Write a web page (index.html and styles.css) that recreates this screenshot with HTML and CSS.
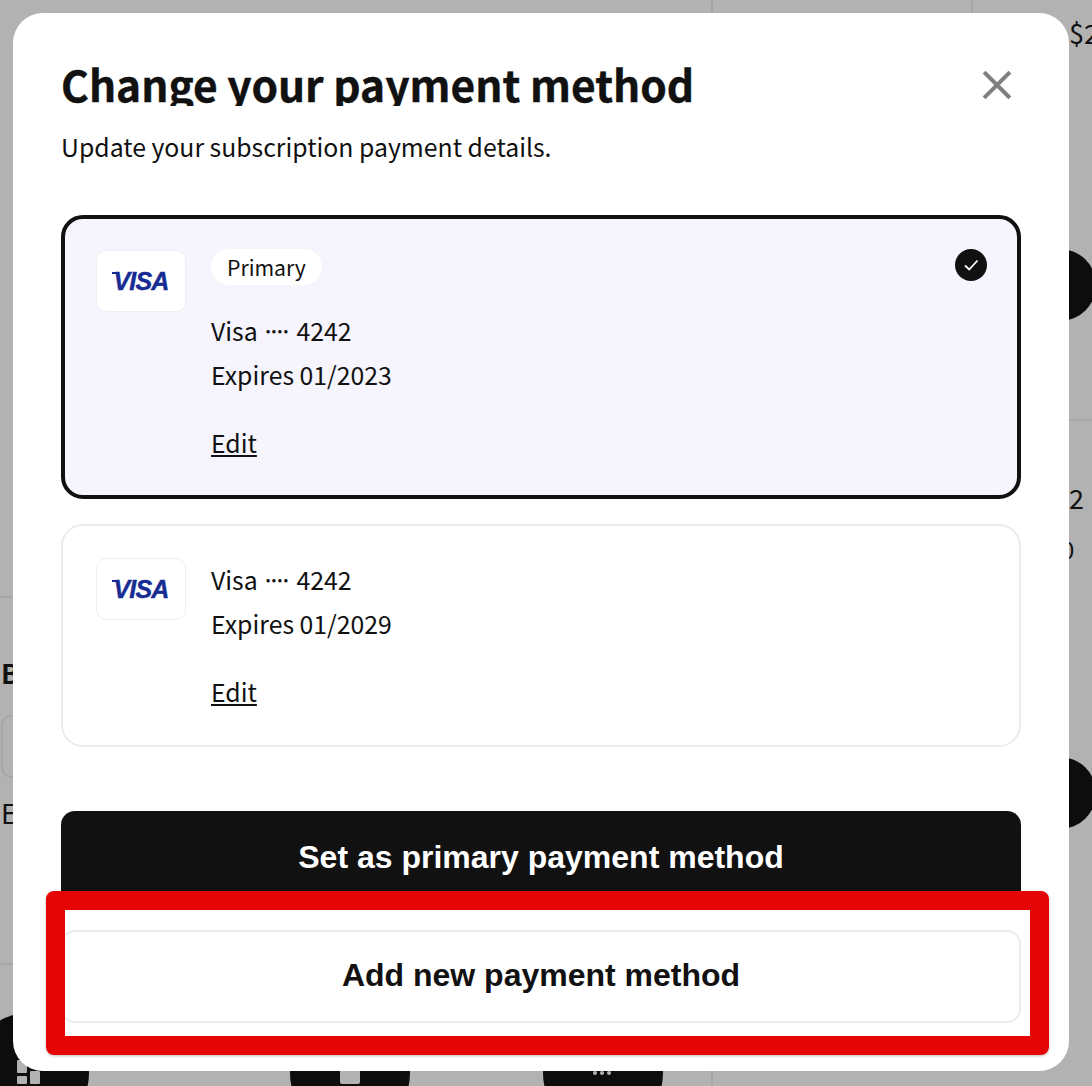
FILE: index.html
```html
<!DOCTYPE html>
<html lang="en">
<head>
<meta charset="utf-8">
<title>Change your payment method</title>
<link rel="stylesheet" href="styles.css">
</head>
<body>
<div class="backdrop" aria-hidden="true">
  <span class="hline hline-a"></span>
  <span class="hline hline-b"></span>
  <span class="hline hline-c"></span>
  <span class="vline vline-a"></span>
  <span class="vline vline-b"></span>
  <span class="vline vline-c"></span>
  <span class="bg-text price">$2</span>
  <span class="bg-text digit">22</span>
  <span class="bg-text zero">0</span>
  <span class="bg-text bold-b">B</span>
  <span class="bg-text exp-e">E</span>
  <span class="bg-input"></span>
  <span class="disc disc-r1"></span>
  <span class="disc disc-r2"></span>
  <span class="disc disc-b1">
    <i class="tile tile-a"></i><i class="tile tile-b"></i><i class="tile tile-c"></i>
  </span>
  <span class="disc disc-b2"><i class="tile tile-d"></i></span>
  <span class="disc disc-b3"><i class="dot dot-a"></i><i class="dot dot-b"></i><i class="dot dot-c"></i></span>
</div>

<main class="modal">
  <header class="modal-head">
    <h1 class="modal-title">Change your payment method</h1>
    <button class="close" type="button" aria-label="Close">
      <svg viewBox="0 0 32 32" width="32" height="32"><path d="M4.5 4.5 L27.5 27.5 M27.5 4.5 L4.5 27.5" fill="none" stroke="#808080" stroke-width="4" stroke-linecap="square"/></svg>
    </button>
  </header>
  <p class="modal-sub">Update your subscription payment details.</p>

  <section class="card card-selected">
    <div class="logo"><span class="visa">VISA</span></div>
    <div class="card-body">
      <span class="pill">Primary</span>
      <p class="line">Visa <span class="dots">····</span> 4242</p>
      <p class="line">Expires 01/2023</p>
      <a class="edit" href="#">Edit</a>
    </div>
    <span class="check">
      <svg viewBox="0 0 32 32" width="32" height="32"><circle cx="16" cy="16" r="16" fill="#111"/><path d="M10 16.5 L14.2 20.5 L22.5 11.5" fill="none" stroke="#fff" stroke-width="1.8"/></svg>
    </span>
  </section>

  <section class="card">
    <div class="logo"><span class="visa">VISA</span></div>
    <div class="card-body">
      <p class="line">Visa <span class="dots">····</span> 4242</p>
      <p class="line">Expires 01/2029</p>
      <a class="edit" href="#">Edit</a>
    </div>
  </section>

  <button class="btn btn-primary" type="button">Set as primary payment method</button>
  <button class="btn btn-secondary" type="button">Add new payment method</button>
</main>

<div class="highlight" aria-hidden="true"></div>
</body>
</html>
```
FILE: styles.css
```css
* { box-sizing: border-box; }

html, body {
  margin: 0;
  width: 1092px;
  height: 1086px;
  overflow: hidden;
}

body {
  position: relative;
  background: #b2b2b2;
  color: #111;
  font-family: "Noto Sans CJK JP", "Noto Sans", sans-serif;
}

.backdrop { position: absolute; inset: 0; overflow: hidden; }
.hline, .vline, .bg-text, .bg-input, .disc { position: absolute; }
.hline { height: 2px; background: #a6a6a6; }
.hline-a { left: 0; top: 596px; width: 20px; }
.hline-b { left: 0; top: 963px; width: 20px; }
.hline-c { left: 1060px; top: 419px; width: 32px; }
.vline { width: 2px; background: #a6a6a6; }
.vline-a { left: 711px; top: 0; height: 20px; }
.vline-b { left: 971px; top: 0; height: 20px; }
.vline-c { left: 711px; top: 1060px; height: 26px; }

.bg-text { font-size: 27px; line-height: 32px; color: #111; white-space: nowrap; }
.price { left: 1069px; top: 17px; }
.digit { left: 1054px; top: 482px; }
.zero { left: 1061px; top: 533px; font-size: 24px; }
.bold-b { left: 1px; top: 657px; font-weight: 700; }
.exp-e { left: 1px; top: 797px; }
.bg-input { left: 1px; top: 715px; width: 60px; height: 63px; border: 2px solid #a6a6a6; border-radius: 10px; }

.disc { background: #0d0d0d; border-radius: 50%; }
.disc-r1, .disc-r2 { width: 72px; height: 72px; left: 1024px; }
.disc-r1 { top: 249px; }
.disc-r2 { top: 757px; }
.disc-b1, .disc-b2, .disc-b3 { width: 120px; height: 120px; top: 1013px; }
.disc-b1 { left: -31px; }
.disc-b2 { left: 290px; }
.disc-b3 { left: 543px; }

.tile { position: absolute; background: #b2b2b2; border-radius: 1px; }
.tile-a { left: 48px; top: 47px; width: 10px; height: 13px; }
.tile-b { left: 48px; top: 63px; width: 10px; height: 8px; }
.tile-c { left: 61px; top: 58px; width: 10px; height: 13px; }
.tile-d { left: 50px; top: 50px; width: 20px; height: 21px; border-radius: 2px; }
.dot { position: absolute; top: 58px; width: 4px; height: 4px; border-radius: 50%; background: #b2b2b2; }
.dot-a { left: 50px; }
.dot-b { left: 57px; }
.dot-c { left: 64px; }

.modal {
  position: absolute;
  left: 13px;
  top: 13px;
  width: 1056px;
  height: 1058px;
  padding: 50px 48px 0;
  background: #fff;
  border-radius: 30px;
  display: flex;
  flex-direction: column;
}

.modal-head { display: flex; justify-content: space-between; align-items: flex-start; }
.modal-title {
  margin: 0 0 0 0;
  height: 43px;
  overflow: hidden;
  font-size: 42.5px;
  line-height: 42px;
  font-weight: 700;
  -webkit-text-stroke: 0.4px #111;
}
.close {
  margin: 6px 8px 0 0;
  padding: 0;
  width: 32px;
  height: 32px;
  border: 0;
  background: none;
}
.close svg { display: block; }

.modal-sub {
  margin: 21px 0 50px 0;
  font-size: 24.8px;
  line-height: 38px;
}

.card {
  display: flex;
  align-items: flex-start;
  gap: 25px;
  padding: 32px 33px 32px;
  border: 2px solid #ebebf0;
  border-radius: 22px;
  background: #fff;
  margin-bottom: 25px;
}
.card-selected {
  position: relative;
  background: #f6f4fd;
  border: 4px solid #111;
  padding: 31px 31px 31px;
}

.logo {
  flex: none;
  width: 90px;
  height: 62px;
  display: flex;
  align-items: center;
  justify-content: center;
  background: #fff;
  border: 1px solid #efeff3;
  border-radius: 10px;
}
.visa {
  position: relative;
  font-family: "Liberation Sans", Arial, sans-serif;
  font-style: italic;
  font-weight: 700;
  font-size: 25px;
  letter-spacing: -0.8px;
  color: #172b93;
  -webkit-text-stroke: 0.4px #172b93;
}
.visa::before {
  content: "";
  position: absolute;
  left: -1px;
  top: 5px;
  width: 7px;
  height: 2px;
  background: #172b93;
}

.card-body { display: flex; flex-direction: column; align-items: flex-start; margin-top: -1px; }
.pill {
  height: 36px;
  padding: 0 16px;
  margin-bottom: 23px;
  border-radius: 18px;
  background: #fff;
  font-size: 21.2px;
  line-height: 36px;
}
.line { margin: 0; font-size: 24.8px; line-height: 44px; }
.dots { letter-spacing: -8px; margin: 0 6px 0 -2px; }
.edit {
  margin-top: 24px;
  font-size: 24.8px;
  line-height: 44px;
  color: #111;
  text-decoration: underline;
}

.check { position: absolute; right: 30px; top: 30px; width: 32px; height: 32px; }
.check svg { display: block; }

.btn {
  display: block;
  width: 960px;
  height: 93px;
  flex: none;
  border-radius: 14px;
  font-family: "Liberation Sans", Arial, sans-serif;
  font-weight: 700;
  font-size: 32px;
  text-align: center;
}
.btn-primary { margin-top: 39px; background: #111; color: #fff; border: 0; }
.btn-secondary { margin-top: 26px; padding-bottom: 3px; background: #fff; color: #111; border: 2px solid #ebebf0; }

.highlight {
  position: absolute;
  left: 46px;
  top: 891px;
  width: 1003px;
  height: 164px;
  border: 19px solid #e60505;
  border-radius: 8px;
  box-shadow: 0 1px 3px rgba(0, 0, 0, .25);
}
```
